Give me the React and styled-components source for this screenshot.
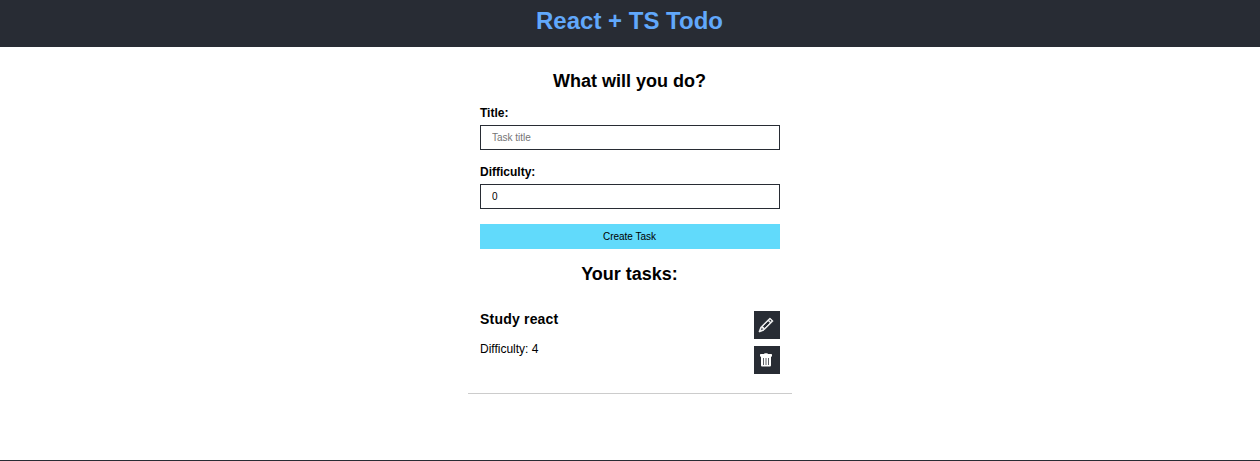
import React from "react";
import styled, { createGlobalStyle } from "styled-components";
import { BsPencil } from "react-icons/bs";

const GlobalStyle = createGlobalStyle`
  * { box-sizing: border-box; margin: 0; padding: 0; }
  body {
    font-family: "Liberation Sans", Arial, sans-serif;
    font-size: 12px;
    color: #000;
    background: #fff;
    overflow: hidden;
  }
`;

const Page = styled.div`
  display: flex;
  flex-direction: column;
  height: 461px;
`;

const Header = styled.header`
  height: 47px;
  padding: 7px 1px 0 0;
  background: #282c34;
  text-align: center;
`;

const Brand = styled.h1`
  font-size: 24px;
  line-height: 28px;
  color: #61a8fb;
`;

const Main = styled.main`
  flex: 1;
  width: 324px;
  margin: 0 auto;
  padding-top: 24px;
`;

const Heading = styled.h2`
  padding-right: 1px;
  font-size: 18px;
  line-height: 20px;
  text-align: center;
`;

const Form = styled.form`
  padding: 15px 12px 0;
  margin-bottom: 15px;
`;

const Field = styled.div`
  display: flex;
  flex-direction: column;
  gap: 5px;
  margin-bottom: 15px;
`;

const Label = styled.label`
  font-size: 12px;
  font-weight: bold;
  line-height: 14px;
`;

const Input = styled.input`
  height: 25px;
  padding: 0 11px;
  border: 1px solid #282c34;
  border-radius: 0;
  outline: none;
  font: 10px "Liberation Sans", Arial, sans-serif;
  color: #000;
  &::placeholder { color: #757575; }
`;

const Submit = styled.button`
  display: block;
  width: 100%;
  height: 25px;
  padding-right: 1px;
  border: 0;
  background: #61dafb;
  font: 10px "Liberation Sans", Arial, sans-serif;
  color: #000;
`;

const Task = styled.article`
  display: flex;
  justify-content: space-between;
  height: 110px;
  padding: 27px 12px 0;
  border-bottom: 1px solid #ccc;
`;

const TaskTitle = styled.h4`
  font-size: 14px;
  line-height: 16px;
  margin-bottom: 15px;
  letter-spacing: 0.2px;
`;

const TaskText = styled.p`
  line-height: 14px;
`;

const Actions = styled.div`
  display: flex;
  flex-direction: column;
  gap: 7px;
`;

const IconButton = styled.button`
  display: flex;
  align-items: center;
  justify-content: center;
  width: 26px;
  height: 28px;
  padding-right: 2px;
  border: 0;
  background: #282c34;
  color: #fff;
  svg {
    width: 14px;
    height: 14px;
    overflow: visible;
    stroke-width: ${(p) => p.$weight};
  }
`;

const Footer = styled.footer`
  height: 1px;
  background: #282c34;
`;

const TrashIcon = () => (
  <svg viewBox="0 0 14 14" fill="none" aria-hidden="true">
    <path
      fill="currentColor"
      d="M1.7 1H5l.7-.8h2.6L9 1h3.3c.4 0 .7.3.7.7v1.4c0 .4-.3.7-.7.7H12v8.4c0 .8-.6 1.3-1.3 1.3H3.3c-.7 0-1.3-.5-1.3-1.3V3.8h-.3c-.4 0-.7-.3-.7-.7V1.7c0-.4.3-.7.7-.7Z"
    />
    <path stroke="#282c34" strokeWidth="0.75" d="M4.5 5v7M7 5v7M9.5 5v7" />
  </svg>
);

export default function App() {
  return (
    <Page>
      <GlobalStyle />
      <Header>
        <Brand>React + TS Todo</Brand>
      </Header>
      <Main>
        <Heading>What will you do?</Heading>
        <Form onSubmit={(e) => e.preventDefault()}>
          <Field>
            <Label htmlFor="title">Title:</Label>
            <Input id="title" placeholder="Task title" />
          </Field>
          <Field>
            <Label htmlFor="difficulty">Difficulty:</Label>
            <Input id="difficulty" defaultValue="0" />
          </Field>
          <Submit type="submit">Create Task</Submit>
        </Form>
        <Heading>Your tasks:</Heading>
        <Task>
          <div>
            <TaskTitle>Study react</TaskTitle>
            <TaskText>Difficulty: 4</TaskText>
          </div>
          <Actions>
            <IconButton $weight={0.8} aria-label="Edit"><BsPencil strokeWidth="0.8" /></IconButton>
            <IconButton aria-label="Delete"><TrashIcon /></IconButton>
          </Actions>
        </Task>
      </Main>
      <Footer />
    </Page>
  );
}
